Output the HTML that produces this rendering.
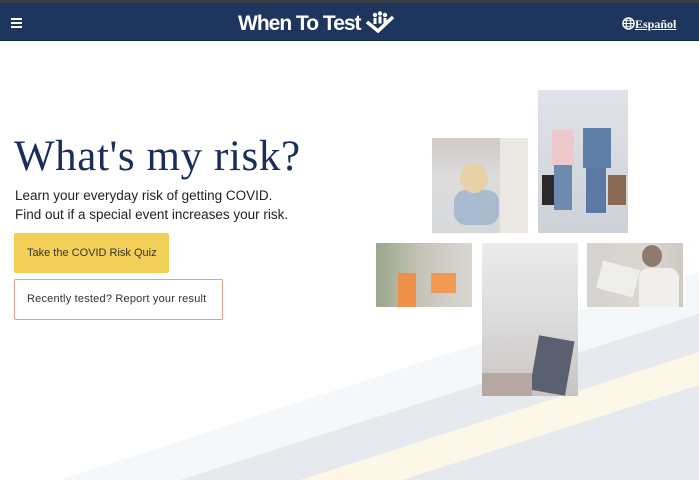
<!DOCTYPE html>
<html><head><meta charset="utf-8"><style>
*{margin:0;padding:0;box-sizing:border-box}
body{width:699px;height:480px;overflow:hidden;background:#fff;font-family:"Liberation Sans",sans-serif;position:relative}
.top{position:absolute;left:0;top:0;width:699px;height:3px;background:#3b3f46}
.nav{position:absolute;left:0;top:3px;width:699px;height:38px;background:#1e355e;border-bottom:1px solid #152847}
.ham{position:absolute;left:11px;top:15px;width:11px}
.ham i{display:block;height:2px;background:#fff;margin-bottom:2px}
.logo{position:absolute;left:238px;top:8px;color:#fff;font-weight:bold;font-size:21px;letter-spacing:-1px}
.es{position:absolute;left:622px;top:14px;color:#fff;font-family:"Liberation Serif",serif;font-size:12px;font-weight:bold;text-decoration:underline}
h1{position:absolute;left:14px;top:132px;font-family:"Liberation Serif",serif;font-weight:normal;font-size:43px;color:#1b2e5a;letter-spacing:0.6px}
.p{position:absolute;left:15px;top:186px;font-size:13.5px;line-height:19px;color:#222}
.b1{position:absolute;left:14px;top:233px;width:155px;height:40px;background:#f2d057;border-radius:2px;font-size:11px;color:#333;padding-left:13px;line-height:40px}
.b2{position:absolute;left:14px;top:279px;width:209px;height:41px;border:1px solid #e0a090;border-radius:2px;font-size:11px;color:#333;padding-left:12px;line-height:39px;letter-spacing:0.2px}
.ph{position:absolute;overflow:hidden}
</style></head><body>
<svg style="position:absolute;left:0;top:0" width="699" height="480">
<polygon points="60,480 699,272 699,480" fill="#f5f8fa"/>
<polygon points="180,480 699,314 699,480" fill="#e6e9ed"/>
<polygon points="300,480 699,352 699,385 402,480" fill="#fdf7e7"/>
</svg>
<div class="top"></div>
<div class="nav">
<div class="ham"><i></i><i></i><i></i></div>
<div class="logo">When To Test <svg width="30" height="22" viewBox="0 0 30 22" style="vertical-align:-3px"><circle cx="10" cy="4" r="2.2" fill="#fff"/><circle cx="15" cy="2.5" r="2.2" fill="#fff"/><circle cx="20" cy="4" r="2.2" fill="#fff"/><rect x="8.5" y="7" width="3" height="6" fill="#fff"/><rect x="13.5" y="5.5" width="3" height="7" fill="#fff"/><rect x="18.5" y="7" width="3" height="6" fill="#fff"/><path d="M2 11 L13 20 L28 6" stroke="#fff" stroke-width="3.5" fill="none"/></svg></div>
<div class="es"><svg width="13" height="13" viewBox="0 0 14 14" style="vertical-align:-2px"><circle cx="7" cy="7" r="6" fill="none" stroke="#fff" stroke-width="1.5"/><ellipse cx="7" cy="7" rx="2.5" ry="6" fill="none" stroke="#fff" stroke-width="1.2"/><path d="M1 7H13M2 4H12M2 10H12" stroke="#fff" stroke-width="1"/></svg>Español</div>
</div>
<h1>What's my risk?</h1>
<div class="p">Learn your everyday risk of getting COVID.<br>Find out if a special event increases your risk.</div>
<div class="b1">Take the COVID Risk Quiz</div>
<div class="b2">Recently tested? Report your result</div>

<div class="ph" style="left:432px;top:138px;width:96px;height:95px;background:linear-gradient(#cfcac4,#dcdcdc 40%,#d6d8da)">
<div style="position:absolute;left:22px;top:52px;width:45px;height:35px;background:#a9bccf;border-radius:12px"></div>
<div style="position:absolute;left:28px;top:25px;width:28px;height:30px;background:#e7d2a8;border-radius:50%"></div>
<div style="position:absolute;left:68px;top:0px;width:28px;height:95px;background:#ece8e4"></div>
</div>
<div class="ph" style="left:538px;top:90px;width:90px;height:143px;background:linear-gradient(#dfe3e8,#cdd2d8)">
<div style="position:absolute;left:14px;top:40px;width:22px;height:35px;background:#edc8cc"></div>
<div style="position:absolute;left:16px;top:75px;width:18px;height:45px;background:#6d8bb0"></div>
<div style="position:absolute;left:45px;top:38px;width:28px;height:40px;background:#5d7fa8"></div>
<div style="position:absolute;left:48px;top:78px;width:20px;height:45px;background:#5a7aa3"></div>
<div style="position:absolute;left:4px;top:85px;width:12px;height:30px;background:#2a2a2a"></div>
<div style="position:absolute;left:70px;top:85px;width:18px;height:30px;background:#8a6a55"></div>
</div>
<div class="ph" style="left:376px;top:243px;width:96px;height:64px;background:linear-gradient(90deg,#9aa88c,#c9c4bc 50%,#d9d6d2)">
<div style="position:absolute;left:22px;top:30px;width:18px;height:34px;background:#ee8f4a"></div>
<div style="position:absolute;left:55px;top:30px;width:25px;height:20px;background:#f09a55"></div>
</div>
<div class="ph" style="left:482px;top:243px;width:96px;height:153px;background:linear-gradient(#ebebea,#dcdbdb 50%,#c9c4c2)">
<div style="position:absolute;left:52px;top:95px;width:36px;height:55px;background:#5a6070;transform:rotate(10deg)"></div>
<div style="position:absolute;left:0;top:130px;width:50px;height:23px;background:#b6a7a0"></div>
</div>
<div class="ph" style="left:587px;top:243px;width:96px;height:64px;background:linear-gradient(90deg,#d5d3cf,#dcd7d0 60%,#cfc9c2)">
<div style="position:absolute;left:12px;top:22px;width:38px;height:28px;background:#eeeeea;transform:rotate(15deg)"></div>
<div style="position:absolute;left:52px;top:25px;width:40px;height:39px;background:#f0efec;border-radius:10px 10px 0 0"></div>
<div style="position:absolute;left:55px;top:2px;width:20px;height:22px;background:#8f7a6e;border-radius:50%"></div>
</div>
</body></html>
